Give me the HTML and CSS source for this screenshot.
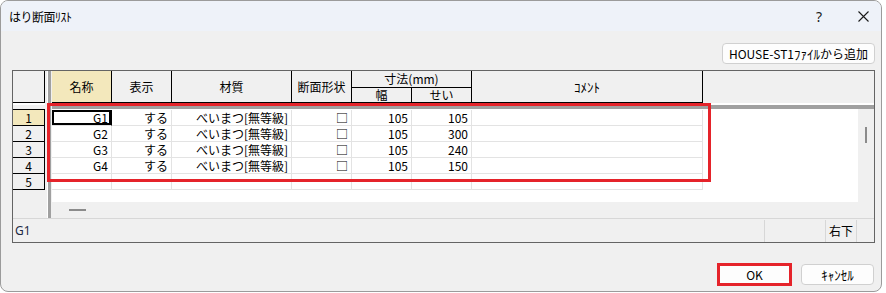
FILE: index.html
```html
<!DOCTYPE html>
<html lang="ja">
<head>
    <meta charset="UTF-8">
    <title>はり断面ﾘｽﾄ</title>
    <link rel="stylesheet" href="styles.css">
</head>
<body>

    <div class="window">
        <div class="titlebar">
            <span class="title">はり断面ﾘｽﾄ</span>
            <span class="tb-help">?</span>
            <span class="tb-close">
                <svg width="11" height="11" viewBox="0 0 11 11"><path d="M0.5 0.5L10.5 10.5M10.5 0.5L0.5 10.5" stroke="#1a1a1a" stroke-width="1.1" fill="none"/></svg>
            </span>
        </div>

        <div class="content">
            <div class="toolbar">
                <button class="btn btn-add">HOUSE-ST1<span class="kana">ﾌｧｲﾙ</span>から追加</button>
            </div>

            <div class="frame">
                <div class="sheet">
                    <div class="corner"></div>
                    <div class="vsplit"></div>
                    <div class="head">
                        <div class="hcell hc-name sel">名称</div>
                        <div class="hcell hc-show">表示</div>
                        <div class="hcell hc-mat">材質</div>
                        <div class="hcell hc-shape">断面形状</div>
                        <div class="hcell hc-dim">寸法(mm)</div>
                        <div class="hcell hc-w">幅</div>
                        <div class="hcell hc-h">せい</div>
                        <div class="hcell hc-cmt"><span class="kana">ｺﾒﾝﾄ</span></div>
                    </div>
                    <div class="hsplit-left"></div>
                    <div class="hsplit"></div>

                    <div class="rowheads">
                        <div class="rh sel">1</div>
                        <div class="rh">2</div>
                        <div class="rh">3</div>
                        <div class="rh">4</div>
                        <div class="rh">5</div>
                    </div>

                    <div class="body">
                        <div class="data">
                            <div class="row">
                                <div class="cell current">G1</div>
                                <div class="cell">する</div>
                                <div class="cell">べいまつ[無等級]</div>
                                <div class="cell">□</div>
                                <div class="cell">105</div>
                                <div class="cell">105</div>
                                <div class="cell"></div>
                            </div>
                            <div class="row">
                                <div class="cell">G2</div>
                                <div class="cell">する</div>
                                <div class="cell">べいまつ[無等級]</div>
                                <div class="cell">□</div>
                                <div class="cell">105</div>
                                <div class="cell">300</div>
                                <div class="cell"></div>
                            </div>
                            <div class="row">
                                <div class="cell">G3</div>
                                <div class="cell">する</div>
                                <div class="cell">べいまつ[無等級]</div>
                                <div class="cell">□</div>
                                <div class="cell">105</div>
                                <div class="cell">240</div>
                                <div class="cell"></div>
                            </div>
                            <div class="row">
                                <div class="cell">G4</div>
                                <div class="cell">する</div>
                                <div class="cell">べいまつ[無等級]</div>
                                <div class="cell">□</div>
                                <div class="cell">105</div>
                                <div class="cell">150</div>
                                <div class="cell"></div>
                            </div>
                            <div class="row">
                                <div class="cell"></div>
                                <div class="cell"></div>
                                <div class="cell"></div>
                                <div class="cell"></div>
                                <div class="cell"></div>
                                <div class="cell"></div>
                                <div class="cell"></div>
                            </div>
                        </div>
                        <div class="vgutter"><div class="vthumb"></div></div>
                        <div class="hgutter"><div class="hthumb"></div></div>
                        <div class="grip"></div>
                    </div>
                </div>

                <div class="statusbar">
                    <div class="sb-main">G1</div>
                    <div class="sb-cell sb-a"></div>
                    <div class="sb-cell sb-b">右下</div>
                    <div class="sb-cell sb-c"></div>
                </div>

                <div class="mark"></div>
            </div>

            <div class="footer">
                <button class="btn btn-ok">OK</button>
                <button class="btn btn-cancel"><span class="kana">ｷｬﾝｾﾙ</span></button>
            </div>
        </div>
    </div>

</body>
</html>
```

FILE: styles.css
```css
body {
    margin: 0;
    background: #ffffff;
    font-family: "Noto Sans CJK JP", "Noto Sans", sans-serif;
    font-size: 12px;
    color: #000;
}
.window {
    width: 882px;
    height: 292px;
    box-sizing: border-box;
    border: 1px solid #9b9b9b;
    border-radius: 8px;
    background: #f0f0f0;
    overflow: hidden;
}
.titlebar {
    height: 30px;
    background: #eef2f9;
    display: flex;
    align-items: center;
    padding-left: 8px;
}
.title {
    flex: 1;
    font-size: 12px;
    letter-spacing: -0.5px;
}
.tb-help {
    width: 36px;
    margin-right: 8px;
    text-align: center;
    font-family: "Noto Sans", sans-serif;
    font-size: 14px;
    color: #1a1a1a;
}
.tb-close {
    width: 36px;
    display: flex;
    justify-content: center;
}
.content {
    padding: 12px 6px 0 11px;
}
.toolbar {
    display: flex;
    justify-content: flex-end;
    margin-bottom: 6px;
}
.btn {
    font-family: "Noto Sans CJK JP", "Noto Sans", sans-serif;
    font-size: 12px;
    color: #000;
    background: #fdfdfd;
    border: 1px solid #d0d0d0;
    border-radius: 4px;
    padding: 0;
    line-height: 1;
}
.kana {
    font-size: 13px;
}
.btn-add {
    width: 153px;
    height: 21px;
}
.frame {
    position: relative;
    height: 173px;
    box-sizing: border-box;
    border: 1px solid #646464;
    display: flex;
    flex-direction: column;
}
.sheet {
    height: 147px;
    display: grid;
    grid-template-columns: 32px 7px 1fr;
    grid-template-rows: 32px 6px 1fr;
}
.corner {
    grid-column: 1;
    grid-row: 1;
    border-right: 1px solid #000;
    border-bottom: 1px solid #000;
}
.vsplit {
    grid-column: 2;
    grid-row: 1 / 4;
    background: linear-gradient(to right, #f0f0f0 0 2px, #ffffff 2px 3px, #a0a0a0 3px 6px, #f0f0f0 6px);
}
.hsplit-left {
    grid-column: 1;
    grid-row: 2;
    background: linear-gradient(#ffffff 0 2px, #f0f0f0 2px);
}
.hsplit {
    grid-column: 3;
    grid-row: 2;
    background: linear-gradient(#ffffff 0 2px, #a0a0a0 2px);
}
.head {
    grid-column: 3;
    grid-row: 1;
    display: grid;
    grid-template-columns: 60px 60px 120px 60px 60px 60px 231px 1fr;
    grid-template-rows: 17px 15px;
}
.hcell {
    box-sizing: border-box;
    border-right: 1px solid #000;
    border-bottom: 1px solid #000;
    display: flex;
    align-items: center;
    justify-content: center;
    line-height: 1;
    grid-row: 1 / 3;
}
.hc-dim {
    grid-column: 5 / 7;
    grid-row: 1;
}
.hc-w {
    grid-column: 5;
    grid-row: 2;
}
.hc-h {
    grid-column: 6;
    grid-row: 2;
}
.hc-cmt {
    grid-column: 7;
}
.sel {
    background: #f3e8bc;
}
.rowheads {
    grid-column: 1;
    grid-row: 3;
    border-top: 1px solid #000;
}
.rh {
    height: 16px;
    box-sizing: border-box;
    border-right: 1px solid #000;
    border-bottom: 1px solid #000;
    text-align: center;
    line-height: 15px;
}
.body {
    grid-column: 3;
    grid-row: 3;
    display: grid;
    grid-template-columns: 1fr 16px;
    grid-template-rows: 1fr 16px;
}
.data {
    background: #ffffff;
    padding-top: 1px;
    overflow: hidden;
}
.row {
    display: grid;
    grid-template-columns: 60px 60px 120px 60px 60px 60px 231px;
    height: 16px;
}
.cell {
    box-sizing: border-box;
    border-right: 1px solid #e3e3e3;
    border-bottom: 1px solid #e3e3e3;
    text-align: right;
    padding-right: 3px;
    line-height: 15px;
    white-space: nowrap;
    overflow: hidden;
}
.cell.current {
    box-shadow: inset 0 0 0 2px #000;
    border-right-color: #000;
}
.vgutter {
    padding: 18px 0 0 7px;
}
.vthumb {
    width: 2px;
    height: 16px;
    background: #8b8b8b;
}
.hgutter {
    padding: 7px 0 0 17px;
}
.hthumb {
    width: 17px;
    height: 2px;
    background: #8b8b8b;
}
.statusbar {
    flex: 1;
    box-sizing: border-box;
    border-top: 1px solid #d7d7d7;
    display: flex;
}
.sb-main {
    flex: 1;
    padding-left: 2px;
    font-family: "Noto Sans", sans-serif;
    font-size: 12px;
    line-height: 23px;
    color: #1c2a44;
}
.sb-cell {
    box-sizing: border-box;
    border-left: 1px solid #d7d7d7;
    margin-top: 1px;
    text-align: center;
    line-height: 21px;
}
.sb-a {
    width: 61px;
}
.sb-b {
    width: 31px;
}
.sb-c {
    width: 18px;
}
.mark {
    position: absolute;
    left: 34px;
    top: 32px;
    width: 664px;
    height: 79px;
    box-sizing: border-box;
    border: 3px solid #e5232a;
}
.footer {
    display: flex;
    justify-content: flex-end;
    align-items: flex-start;
    gap: 9px;
    margin-top: 20px;
    padding-right: 1px;
}
.btn-ok {
    width: 75px;
    height: 23px;
    border: 3px solid #e5232a;
    border-radius: 0;
}
.btn-cancel {
    width: 73px;
    height: 21px;
    margin-top: 1px;
}
```
